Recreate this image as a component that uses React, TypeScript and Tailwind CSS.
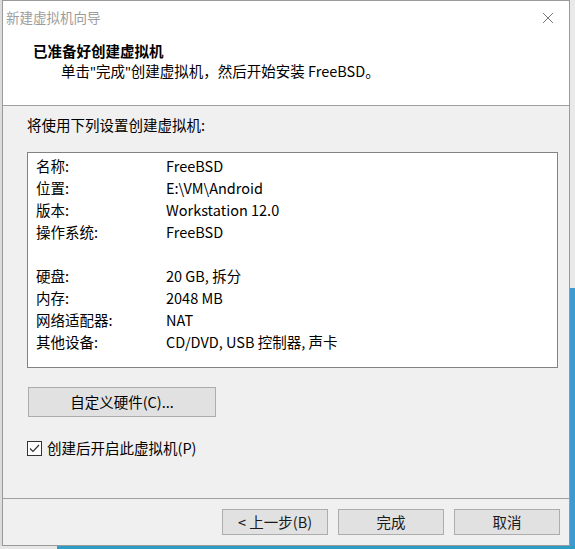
import React from "react";

const font = "font-['Noto_Sans_CJK_SC',sans-serif]";

const settings: [string, string][] = [
  ["名称:", "FreeBSD"],
  ["位置:", "E:\\VM\\Android"],
  ["版本:", "Workstation 12.0"],
  ["操作系统:", "FreeBSD"],
  ["", ""],
  ["硬盘:", "20 GB, 拆分"],
  ["内存:", "2048 MB"],
  ["网络适配器:", "NAT"],
  ["其他设备:", "CD/DVD, USB 控制器, 声卡"],
];

const WinButton = ({ label, className = "" }: { label: string; className?: string }) => (
  <button
    className={`h-[26px] w-[106px] border border-[#adadad] bg-[#e1e1e1] text-[14.5px] leading-none text-[#1a1a1a] ${className}`}
  >
    {label}
  </button>
);

export default function App() {
  return (
    <div className={`w-[575px] h-[549px] overflow-hidden flex flex-col bg-[#e6e6e6] ${font}`}>
      <div className="flex h-[546px]">
        <div className="w-[2px] bg-[#dcdcdc]" />

        {/* Wizard window */}
        <div className="w-[568px] h-[546px] border border-[#9a9a9a] flex flex-col bg-[#f0f0f0]">
          {/* Title bar */}
          <div className="h-[33px] bg-white flex items-center justify-between pl-[3px] pr-[15px]">
            <span className="text-[13.5px] text-[#9c9c9c] leading-none">新建虚拟机向导</span>
            <svg width="12" height="12" viewBox="0 0 12 12" className="text-[#7a7a7a]">
              <path d="M1 1 L11 11 M11 1 L1 11" stroke="currentColor" strokeWidth="1" />
            </svg>
          </div>

          {/* Header */}
          <div className="h-[72px] bg-white border-b border-[#a0a0a0] pt-[7px] text-[#000]">
            <div className="pl-[30px] text-[14.5px] leading-[20px] font-bold">已准备好创建虚拟机</div>
            <div className="pl-[58px] text-[14.5px] leading-[20px]">
              单击<span className="font-['Noto_Sans',sans-serif]">"</span>完成
              <span className="font-['Noto_Sans',sans-serif]">"</span>创建虚拟机，然后开始安装 FreeBSD。
            </div>
          </div>

          {/* Body */}
          <div className="flex-1 pl-[24px] pr-[11px] pt-[9px] text-[14.5px] text-[#000]">
            <div className="leading-[20px]">将使用下列设置创建虚拟机:</div>
            <div className="mt-[17px] h-[216px] bg-white border border-[#828282] pt-[2px] pl-[8px]">
              {settings.map(([k, v], i) => (
                <div key={i} className="flex h-[22px] leading-[22px]">
                  <span className="w-[130px]">{k}</span>
                  <span>{v}</span>
                </div>
              ))}
            </div>
            <button className="mt-[19px] ml-[1px] h-[30px] w-[188px] border border-[#adadad] bg-[#e1e1e1] text-[14.5px] leading-none">
              自定义硬件(C)...
            </button>
            <label className="mt-[23px] flex items-center gap-[5px] h-[16px]">
              <span className="w-[15px] h-[15px] border border-[#333333] bg-white flex items-center justify-center">
                <svg width="11" height="9" viewBox="0 0 11 9">
                  <path d="M1 4.5 L4 7.5 L10 1" stroke="#333333" strokeWidth="1.2" fill="none" />
                </svg>
              </span>
              <span className="leading-none">创建后开启此虚拟机(P)</span>
            </label>
          </div>

          {/* Footer */}
          <div className="h-[47px] border-t border-[#a0a0a0] flex justify-end gap-[10px] pt-[10px] pr-[9px]">
            <WinButton label="< 上一步(B)" />
            <WinButton label="完成" />
            <WinButton label="取消" />
          </div>
        </div>

        <div className="flex-1 flex flex-col">
          <div className="h-[288px] bg-[#e9e9e9]" />
          <div className="flex-1 bg-[#3d9bd4]" />
        </div>
      </div>
      <div className="flex-1 flex">
        <div className="w-[57px] bg-[#e6e6e6]" />
        <div className="flex-1 bg-[#2f9cc4]" />
      </div>
    </div>
  );
}
